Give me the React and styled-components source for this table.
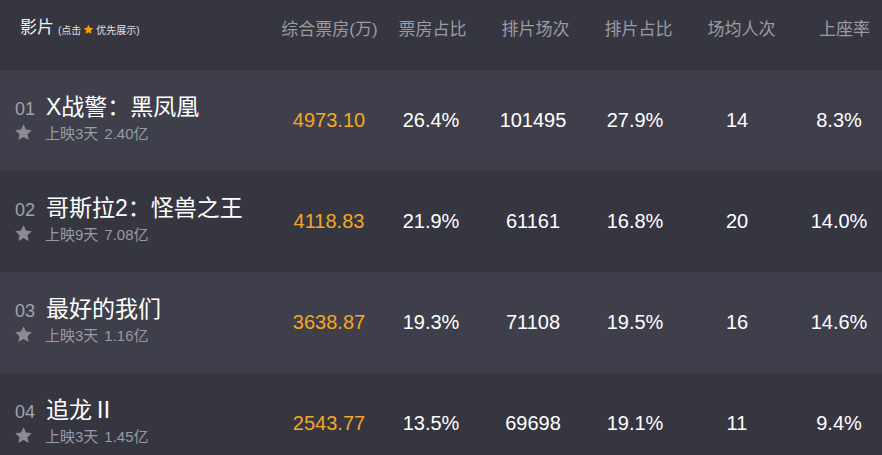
import React from "react";
import styled, { createGlobalStyle } from "styled-components";

const films = [
    { rank: "01", name: "X战警：黑凤凰", days: "上映3天", total: "2.40亿", box: "4973.10", boxRate: "26.4%", shows: "101495", showRate: "27.9%", avg: "14", seat: "8.3%" },
    { rank: "02", name: "哥斯拉2：怪兽之王", days: "上映9天", total: "7.08亿", box: "4118.83", boxRate: "21.9%", shows: "61161", showRate: "16.8%", avg: "20", seat: "14.0%" },
    { rank: "03", name: "最好的我们", days: "上映3天", total: "1.16亿", box: "3638.87", boxRate: "19.3%", shows: "71108", showRate: "19.5%", avg: "16", seat: "14.6%" },
    { rank: "04", name: "追龙Ⅱ", days: "上映3天", total: "1.45亿", box: "2543.77", boxRate: "13.5%", shows: "69698", showRate: "19.1%", avg: "11", seat: "9.4%" },
];

const columns = ["综合票房(万)", "票房占比", "排片场次", "排片占比", "场均人次", "上座率"];

const Star = ({ size, color }) => (
    <svg width={size} height={size} viewBox="0 0 24 24">
        <polygon
            points="12,1.5 15.1,8.3 22.5,9.1 17,14.1 18.5,21.5 12,17.8 5.5,21.5 7,14.1 1.5,9.1 8.9,8.3"
            fill={color}
        />
    </svg>
);

const App = () => {
    return (
        <>
            <GlobalStyle />
            <Board>
                <HeaderRow>
                    <HeaderFilm>
                        <HeaderTitle>影片</HeaderTitle>
                        <HeaderHint>
                            (点击<Star size={11} color="#f5a000" />优先展示)
                        </HeaderHint>
                    </HeaderFilm>
                    {columns.map((c) => (
                        <HeaderCell key={c}>{c}</HeaderCell>
                    ))}
                </HeaderRow>
                {films.map((f, i) => (
                    <Row key={f.rank} light={i % 2 === 0}>
                        <FilmCell>
                            <NameLine>
                                <Rank>{f.rank}</Rank>
                                <Name>{f.name}</Name>
                            </NameLine>
                            <InfoLine>
                                <StarBox>
                                    <Star size={19} color="#8b8b94" />
                                </StarBox>
                                <Info>
                                    {f.days}
                                    <Total>{f.total}</Total>
                                </Info>
                            </InfoLine>
                        </FilmCell>
                        <Cell highlight>{f.box}</Cell>
                        <Cell>{f.boxRate}</Cell>
                        <Cell>{f.shows}</Cell>
                        <Cell>{f.showRate}</Cell>
                        <Cell>{f.avg}</Cell>
                        <Cell>{f.seat}</Cell>
                    </Row>
                ))}
            </Board>
        </>
    );
};

export default App;

const GlobalStyle = createGlobalStyle`
    html, body {
        margin: 0;
        padding: 0;
        background: #363641;
        overflow: hidden;
    }
    body {
        font-family: "Liberation Sans", "Noto Sans CJK SC", sans-serif;
    }
`;

const Board = styled.div`
    width: 882px;
    height: 455px;
    overflow: hidden;
    background: #363641;
`;

const HeaderRow = styled.div`
    display: grid;
    grid-template-columns: 278px repeat(6, 103px);
    height: 70px;
    padding-top: 18px;
    box-sizing: border-box;
    align-items: start;
`;

const HeaderFilm = styled.div`
    display: flex;
    align-items: center;
    padding-left: 20px;
`;

const HeaderTitle = styled.span`
    font-size: 17px;
    color: #f0f0f0;
    line-height: 20px;
`;

const HeaderHint = styled.span`
    display: flex;
    align-items: center;
    gap: 2px;
    margin-left: 4px;
    margin-top: 3px;
    font-size: 10px;
    color: #e0e0e0;
`;

const HeaderCell = styled.div`
    text-align: center;
    font-size: 17px;
    line-height: 24px;
    color: #9b9ba0;
    white-space: nowrap;
`;

const Row = styled.div`
    display: grid;
    grid-template-columns: 278px repeat(6, 102px);
    height: 101px;
    align-items: center;
    background: ${({ light }) => (light ? "#3f3f4b" : "#363641")};
`;

const FilmCell = styled.div`
    display: flex;
    flex-direction: column;
    padding-left: 15px;
    margin-top: -5px;
`;

const NameLine = styled.div`
    display: flex;
    align-items: baseline;
`;

const Rank = styled.span`
    width: 31px;
    font-size: 18px;
    color: #a3a3aa;
`;

const Name = styled.span`
    font-size: 23px;
    line-height: 26px;
    color: #ffffff;
    white-space: nowrap;
`;

const InfoLine = styled.div`
    display: flex;
    align-items: center;
    margin-top: 2px;
`;

const StarBox = styled.span`
    display: flex;
    width: 31px;
    margin-left: -1px;
`;

const Info = styled.span`
    font-size: 15px;
    color: #9a9aa2;
    white-space: nowrap;
`;

const Total = styled.span`
    margin-left: 6px;
`;

const Cell = styled.div`
    text-align: center;
    font-size: 20px;
    color: ${({ highlight }) => (highlight ? "#f5a623" : "#ffffff")};
`;
